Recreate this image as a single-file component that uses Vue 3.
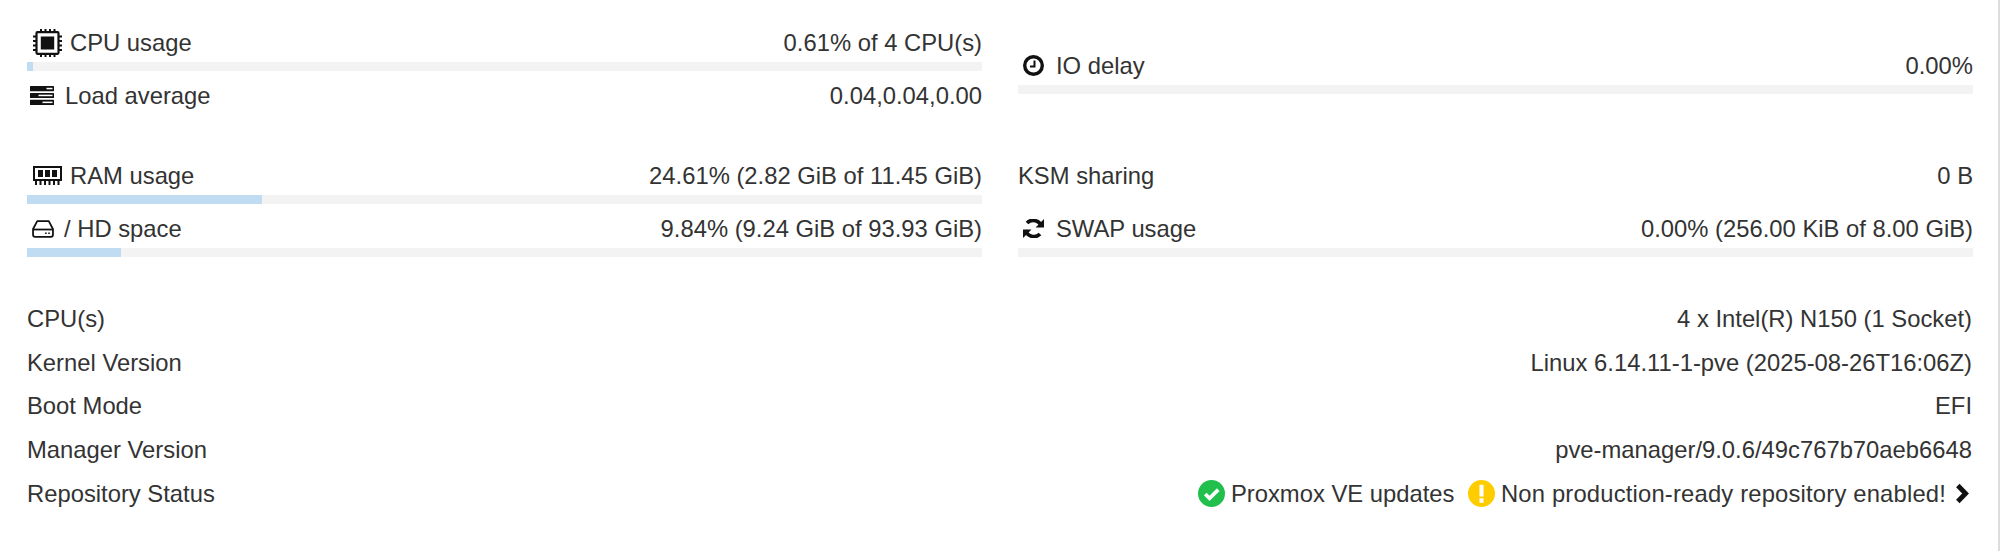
<template>
  <div class="panel">
    <div class="usage-grid">
      <div class="usage-col">
        <div class="stat">
          <div class="stat-row">
            <span class="stat-label">
              <svg class="icon cpu" viewBox="0 0 29 28">
                <path d="M8 0v28M12.5 0v28M17 0v28M21.5 0v28M0 7.5h29M0 12h29M0 16.5h29M0 21h29" stroke="#111" stroke-width="2" fill="none" />
                <rect x="3.5" y="3.2" width="22" height="21.6" rx="1" fill="#fff" stroke="#111" stroke-width="2.2" />
                <rect x="7.8" y="7.5" width="13.4" height="13" fill="#111" />
              </svg>
              CPU usage
            </span>
            <span>0.61% of 4 CPU(s)</span>
          </div>
          <div class="bar"><div class="bar-fill" :style="{ width: '0.61%' }"></div></div>
        </div>
        <div class="stat">
          <div class="stat-row">
            <span class="stat-label">
              <svg class="icon tasks" viewBox="0 0 24 19">
                <rect y="0" width="24" height="5.2" rx="0.5" fill="#111" />
                <rect y="6.9" width="24" height="5.2" rx="0.5" fill="#111" />
                <rect y="13.8" width="24" height="5.2" rx="0.5" fill="#111" />
                <rect x="16.5" y="1.8" width="6" height="1.5" fill="#fff" />
                <rect x="8.5" y="8.7" width="14" height="1.5" fill="#fff" />
                <rect x="12.5" y="15.6" width="10" height="1.5" fill="#fff" />
              </svg>
              Load average
            </span>
            <span>0.04,0.04,0.00</span>
          </div>
        </div>
      </div>
      <div class="usage-col io">
        <div class="stat">
          <div class="stat-row">
            <span class="stat-label">
              <svg class="icon clock" viewBox="0 0 21 21">
                <circle cx="10.5" cy="10.5" r="8.8" fill="none" stroke="#111" stroke-width="3.4" />
                <path d="M11.5 5.500v6H7" fill="none" stroke="#111" stroke-width="2" />
              </svg>
              IO delay
            </span>
            <span>0.00%</span>
          </div>
          <div class="bar"></div>
        </div>
      </div>
    </div>

    <div class="usage-grid second">
      <div class="usage-col">
        <div class="stat">
          <div class="stat-row">
            <span class="stat-label">
              <svg class="icon ram" viewBox="0 0 29 19">
                <path d="M1 1h27v13H1z" fill="none" stroke="#111" stroke-width="2" />
                <path d="M5 4h5v7H5zM12 4h5v7h-5zM19 4h5v7h-5z" fill="#111" />
                <path d="M3 15v4M7.5 15v4M12 15v4M16.5 15v4M21 15v4M25.5 15v4" stroke="#111" stroke-width="2" />
              </svg>
              RAM usage
            </span>
            <span>24.61% (2.82 GiB of 11.45 GiB)</span>
          </div>
          <div class="bar"><div class="bar-fill" :style="{ width: '24.61%' }"></div></div>
        </div>
        <div class="stat">
          <div class="stat-row">
            <span class="stat-label">
              <svg class="icon disk" viewBox="0 0 21 17">
                <path d="M5 1h11l4 7.5v5.5a2 2 0 0 1-2 2H3a2 2 0 0 1-2-2V8.500z" fill="none" stroke="#111" stroke-width="1.7" stroke-linejoin="round" />
                <path d="M1 9h19" stroke="#111" stroke-width="1.7" />
                <path d="M12.500 12.500h1.500M15.500 12.500h1.500" stroke="#111" stroke-width="1.500" />
              </svg>
              / HD space
            </span>
            <span>9.84% (9.24 GiB of 93.93 GiB)</span>
          </div>
          <div class="bar"><div class="bar-fill" :style="{ width: '9.84%' }"></div></div>
        </div>
      </div>
      <div class="usage-col">
        <div class="stat">
          <div class="stat-row">
            <span class="stat-label">KSM sharing</span>
            <span>0 B</span>
          </div>
          <div class="bar empty"></div>
        </div>
        <div class="stat">
          <div class="stat-row">
            <span class="stat-label">
              <svg class="icon swap" viewBox="0 0 21 19">
                <path d="M18.500 7.800A8.500 8 0 0 0 4 4M2.500 11.200A8.500 8 0 0 0 17 15" fill="none" stroke="#111" stroke-width="3.800" />
                <path d="M21 0v8.500h-8.500zM0 19v-8.500h8.500z" fill="#111" />
              </svg>
              SWAP usage
            </span>
            <span>0.00% (256.00 KiB of 8.00 GiB)</span>
          </div>
          <div class="bar"></div>
        </div>
      </div>
    </div>

    <div class="info">
      <div v-for="row in infoRows" :key="row.label" class="info-row">
        <span>{{ row.label }}</span>
        <span>{{ row.value }}</span>
      </div>
      <div class="info-row">
        <span>Repository Status</span>
        <span class="repo">
          <svg class="status" viewBox="0 0 28 28">
            <circle cx="14" cy="14" r="14" fill="#21bf4b" />
            <path d="M7.500 14.500l4.500 4.500 9-9" fill="none" stroke="#fff" stroke-width="3.800" />
          </svg>
          <span class="repo-text">Proxmox VE updates</span>
          <svg class="status warn" viewBox="0 0 28 28">
            <circle cx="14" cy="14" r="14" fill="#ffcc00" />
            <path d="M14 5v12M14 19v4.500" stroke="#fff" stroke-width="4.200" />
          </svg>
          <span class="repo-text wide">Non production-ready repository enabled!</span>
          <svg class="chevron" viewBox="0 0 14 21">
            <path d="M2.800 2.500l7.800 8-7.800 8" fill="none" stroke="#111" stroke-width="4.800" />
          </svg>
        </span>
      </div>
    </div>
    <div class="scroll-edge"></div>
  </div>
</template>

<script setup>
const infoRows = [
  { label: 'CPU(s)', value: '4 x Intel(R) N150 (1 Socket)' },
  { label: 'Kernel Version', value: 'Linux 6.14.11-1-pve (2025-08-26T16:06Z)' },
  { label: 'Boot Mode', value: 'EFI' },
  { label: 'Manager Version', value: 'pve-manager/9.0.6/49c767b70aeb6648' },
]
</script>

<style>
html,
body {
  margin: 0;
  background: #fff;
}
</style>

<style scoped>
.panel {
  position: relative;
  box-sizing: border-box;
  width: 2000px;
  height: 551px;
  padding: 26px 27px 0;
  background: #fff;
  color: #333;
  font-family: "Liberation Sans", Arial, sans-serif;
  font-size: 23.8px;
}
.usage-grid {
  display: grid;
  grid-template-columns: 955px 955px;
  column-gap: 36px;
}
.second {
  margin-top: 44px;
}
.usage-col {
  display: flex;
  flex-direction: column;
  gap: 8px;
}
.io {
  padding-top: 23px;
}
.stat-row {
  display: flex;
  justify-content: space-between;
  align-items: center;
  height: 33px;
  margin-bottom: 3px;
}
.stat-label {
  display: flex;
  align-items: center;
}
.bar {
  height: 9px;
  background: #f3f3f3;
}
.bar.empty {
  background: transparent;
}
.bar-fill {
  height: 100%;
  min-width: 6px;
  background: #bfdcf3;
}
.icon {
  flex: none;
}
.cpu {
  width: 29px;
  height: 28px;
  margin: 0 8px 0 6px;
}
.tasks {
  width: 24px;
  height: 19px;
  margin: 0 11px 0 3px;
}
.clock {
  width: 21px;
  height: 21px;
  margin: 0 12px 0 5px;
}
.ram {
  width: 29px;
  height: 19px;
  margin: 0 8px 0 6px;
}
.disk {
  width: 22px;
  height: 18px;
  margin: 0 10px 0 5px;
}
.swap {
  width: 21px;
  height: 19px;
  margin: 0 12px 0 5px;
}
.info {
  margin-top: 40px;
}
.info-row {
  display: flex;
  justify-content: space-between;
  align-items: center;
  height: 43.7px;
  padding-right: 1px;
}
.repo {
  display: flex;
  align-items: center;
}
.repo-text {
  margin-left: 6px;
}
.repo-text.wide {
  margin-left: 5.5px;
  letter-spacing: 0.18px;
}
.status {
  width: 27px;
  height: 27px;
}
.warn {
  margin-left: 14px;
}
.chevron {
  width: 14px;
  height: 21px;
  margin: 0 3px 0 9px;
}
.scroll-edge {
  position: absolute;
  top: 0;
  right: 0;
  bottom: 0;
  width: 2px;
  background: #ddd;
}
</style>
